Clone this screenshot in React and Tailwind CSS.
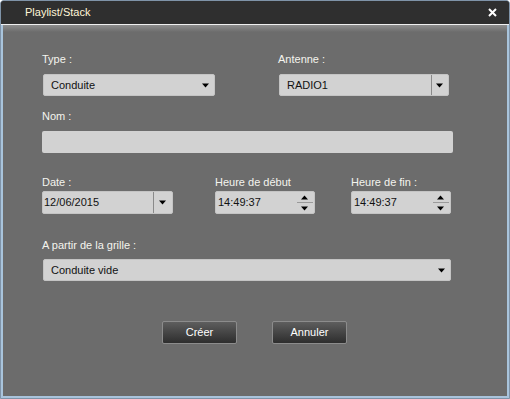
import React from "react";

const font = { fontFamily: '"Liberation Sans", Arial, sans-serif' };

function Down() {
  return (
    <svg width="8" height="5" viewBox="0 0 8 5">
      <path d="M0 0.5 H7 L3.5 4.5 Z" fill="#000" />
    </svg>
  );
}
function Up() {
  return (
    <svg width="8" height="5" viewBox="0 0 8 5">
      <path d="M0 4.5 H7 L3.5 0.5 Z" fill="#000" />
    </svg>
  );
}

function Label({ children }) {
  return <div className="text-[11px] leading-[13px] text-[#f4f4ee]">{children}</div>;
}

function Combo({ text, w, sep, pl = "pl-[7px]" }) {
  return (
    <div
      className={`flex h-[22px] items-center rounded-[2px] bg-[#d2d2d2] border border-[#c4c4c4] ${w}`}
    >
      <div className={`flex-1 text-[11px] text-[#111] ${pl}`}>{text}</div>
      <div
        className={`flex h-full w-[17px] items-center justify-center ${
          sep ? "border-l border-[#8a8a8a]" : ""
        }`}
      >
        <Down />
      </div>
    </div>
  );
}

function TimeField({ text }) {
  return (
    <div className="flex h-[23px] w-[100px] items-center rounded-[2px] bg-[#d2d2d2] border border-[#c4c4c4]">
      <div className="flex-1 pl-[2px] text-[11px] text-[#111]">{text}</div>
      <div className="flex h-full w-[18px] flex-col items-center justify-center">
        <div className="flex h-[10px] items-center">
          <Up />
        </div>
        <div className="h-px w-[16px] bg-[#9a9a9a]" />
        <div className="flex h-[10px] items-center">
          <Down />
        </div>
      </div>
    </div>
  );
}

function Button({ children }) {
  return (
    <div className="flex h-[23px] w-[75px] items-center justify-center rounded-[2px] border border-[#8c8c8c] bg-gradient-to-b from-[#5e5e5e] to-[#2e2e2e] text-[11px] text-white">
      {children}
    </div>
  );
}

export default function App() {
  return (
    <div
      style={font}
      className="flex h-[399px] w-[510px] flex-col overflow-hidden rounded-t-[4px] border border-[#7f93a8] bg-[#2e2e2e]"
    >
      <div className="flex h-[24px] shrink-0 items-center justify-between border-b border-[#f0f0f0] bg-[#2f2f2f] pl-[24px] pr-[12px]">
        <span className="text-[11px] text-[#fff6d8]">Playlist/Stack</span>
        <svg width="9" height="9" viewBox="0 0 9 9">
          <path d="M1 1 L8 8 M8 1 L1 8" stroke="#fff" strokeWidth="2" />
        </svg>
      </div>
      <div className="flex flex-1 flex-col border-x-[2px] border-b-[2px] border-[#a9c4dc] bg-[linear-gradient(to_bottom,#8e8e8e_0px,#6c6c6c_7px,#6c6c6c_100%)] pl-[39px] pt-[28px]">
        <div className="flex">
          <div className="w-[236px]">
            <Label>Type :</Label>
            <div className="mt-[8px] pl-px">
              <Combo text="Conduite" w="w-[172px]" />
            </div>
          </div>
          <div>
            <Label>Antenne :</Label>
            <div className="mt-[8px] pl-px">
              <Combo text="RADIO1" w="w-[170px]" sep pl="pl-[7px]" />
            </div>
          </div>
        </div>

        <div className="mt-[14px]">
          <Label>Nom :</Label>
          <div className="mt-[8px] h-[22px] w-[411px] rounded-[2px] bg-[#d2d2d2]" />
        </div>

        <div className="mt-[23px] flex">
          <div className="w-[173px]">
            <Label>Date :</Label>
            <div className="mt-[2px] flex h-[23px] w-[131px] items-center rounded-[2px] bg-[#d2d2d2] border border-[#c4c4c4]">
              <div className="flex-1 pl-[1px] text-[11px] text-[#111]">12/06/2015</div>
              <div className="flex h-full w-[19px] items-center justify-center border-l border-[#8a8a8a]">
                <Down />
              </div>
            </div>
          </div>
          <div className="w-[136px]">
            <Label>Heure de début</Label>
            <div className="mt-[2px]">
              <TimeField text="14:49:37" />
            </div>
          </div>
          <div>
            <Label>Heure de fin :</Label>
            <div className="mt-[2px]">
              <TimeField text="14:49:37" />
            </div>
          </div>
        </div>

        <div className="mt-[25px]">
          <Label>A partir de la grille :</Label>
          <div className="mt-[7px] pl-px">
            <Combo text="Conduite vide" w="w-[408px]" />
          </div>
        </div>

        <div className="mt-[40px] flex gap-[35px] pl-[120px]">
          <Button>Créer</Button>
          <Button>Annuler</Button>
        </div>
      </div>
    </div>
  );
}
